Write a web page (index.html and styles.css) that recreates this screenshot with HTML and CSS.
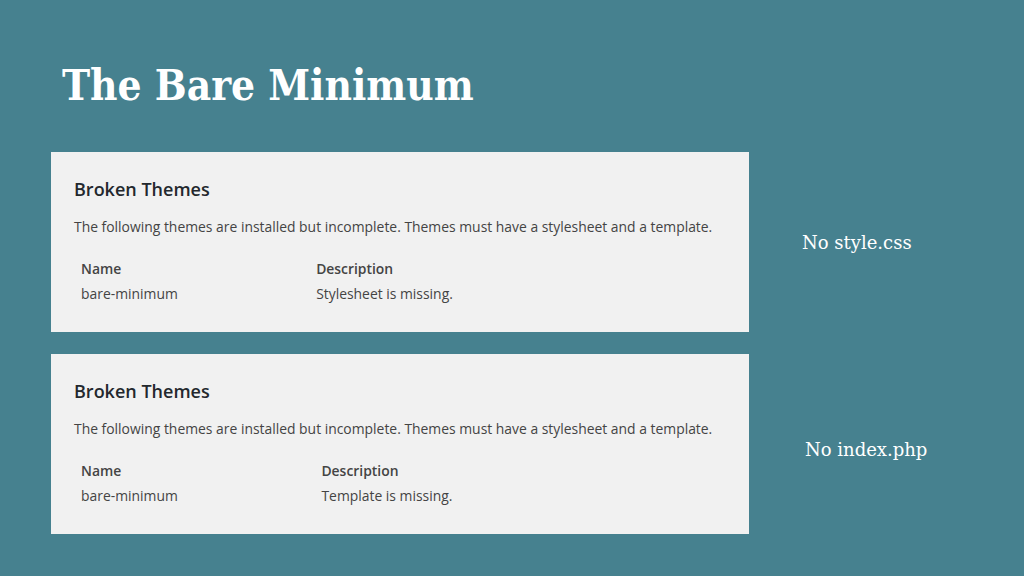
FILE: index.html
```html
<!DOCTYPE html>
<html lang="en">
<head>
    <meta charset="UTF-8">
    <meta name="viewport" content="width=device-width, initial-scale=1.0">
    <title>The Bare Minimum</title>
    <link rel="stylesheet" href="styles.css">
</head>
<body>
    <h1 class="slide-title">The Bare Minimum</h1>
    <div class="slide-rows">
        <div class="slide-row">
            <section class="panel">
                <h2>Broken Themes</h2>
                <p>The following themes are installed but incomplete. Themes must have a stylesheet and a template.</p>
                <table class="broken">
                    <tr><th>Name</th><th>Description</th></tr>
                    <tr><td>bare-minimum</td><td>Stylesheet is missing.</td></tr>
                </table>
            </section>
            <div class="note">No style.css</div>
        </div>
        <div class="slide-row">
            <section class="panel">
                <h2>Broken Themes</h2>
                <p>The following themes are installed but incomplete. Themes must have a stylesheet and a template.</p>
                <table class="broken">
                    <tr><th>Name</th><th>Description</th></tr>
                    <tr><td>bare-minimum</td><td>Template is missing.</td></tr>
                </table>
            </section>
            <div class="note note-low">No index.php</div>
        </div>
    </div>
</body>
</html>
```

FILE: styles.css
```css
body {
    margin: 0;
    width: 1024px;
    height: 576px;
    overflow: hidden;
    background-color: #46818f;
    font-family: 'Open Sans', sans-serif;
}
.slide-title {
    margin: 0;
    padding: 60px 0 0 62px;
    height: 94px;
    box-sizing: border-box;
    color: #fff;
    font-family: 'DejaVu Serif', serif;
    font-stretch: condensed;
    font-weight: bold;
    font-size: 42px;
    line-height: 52px;
}
.slide-rows {
    padding: 58px 0 0 51px;
    display: flex;
    flex-direction: column;
    gap: 22px;
}
.slide-row {
    display: flex;
    align-items: center;
}
.panel {
    width: 698px;
    height: 180px;
    box-sizing: border-box;
    padding: 25px 23px 0;
    background-color: #f1f1f1;
    color: #444;
}
.panel h2 {
    margin: 0;
    font-size: 18px;
    font-weight: 600;
    line-height: 24px;
    color: #23282d;
}
.panel p {
    margin: 16px 0 0;
    font-size: 13.9px;
    line-height: 20px;
}
.broken {
    margin-top: 19px;
    width: 555px;
    border-collapse: collapse;
    font-size: 13.9px;
}
.broken th, .broken td {
    padding: 2px 7px;
    text-align: left;
    line-height: 21px;
}
.broken th {
    font-weight: 600;
}
.note {
    margin-left: 53px;
    color: #fff;
    font-family: 'DejaVu Serif', serif;
    font-size: 18px;
}
.note-low {
    margin: 10px 0 0 56px;
}
```
